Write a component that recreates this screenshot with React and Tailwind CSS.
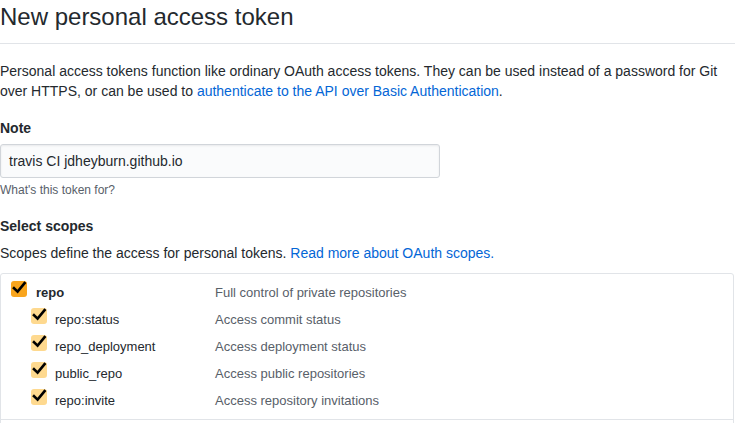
import React from 'react';

const scopes = [
  { name: 'repo:status', description: 'Access commit status' },
  { name: 'repo_deployment', description: 'Access deployment status' },
  { name: 'public_repo', description: 'Access public repositories' },
  { name: 'repo:invite', description: 'Access repository invitations' },
];

function Check({ light }) {
  return (
    <span
      className={`mt-[2px] flex h-4 w-4 flex-shrink-0 rounded-[3px] ${
        light ? 'bg-[#fed98f]' : 'bg-[#f9a51d]'
      }`}
    >
      <svg viewBox="0 0 16 16" className="h-4 w-4">
        <path
          d="M3 7.2 L6.6 10.6 L13.6 2.2"
          fill="none"
          stroke="#000"
          strokeWidth="2.6"
          strokeLinecap="square"
        />
      </svg>
    </span>
  );
}

function ScopeRow({ name, description, child }) {
  return (
    <div className="flex h-[27px] items-start">
      <div className={`flex w-[214px] items-start ${child ? 'pl-[30px] gap-2' : 'pl-[10px] gap-[9px]'}`}>
        <Check light={child} />
        <span className={`text-[13px] leading-[27px] text-[#24292e] ${child ? '' : 'font-bold'}`}>
          {name}
        </span>
      </div>
      <span className="text-[13px] leading-[27px] text-[#586069]">{description}</span>
    </div>
  );
}

export default function App() {
  return (
    <div className="w-[735px] bg-white text-[#24292e] font-['Liberation_Sans',Arial,sans-serif]">
      <div className="pt-[2px] pb-[11px] border-b border-[#e1e4e8]">
        <h1 className="text-[24px] leading-[30px] font-normal">New personal access token</h1>
      </div>

      <p className="mt-[17px] text-[14px] leading-5">
        Personal access tokens function like ordinary OAuth access tokens. They can be used instead of a
        password for Git over HTTPS, or can be used to{' '}
        <a className="text-[#0366d6]">authenticate to the API over Basic Authentication</a>.
      </p>

      <div className="mt-[17px] text-[14px] leading-5 font-bold">Note</div>
      <div className="mt-[6px] flex h-[34px] w-[440px] items-center rounded-[3px] border border-[#d1d5da] bg-[#fafbfc] px-2 text-[14px] shadow-[inset_0_1px_2px_rgba(27,31,35,0.075)]">
        travis CI jdheyburn.github.io
      </div>
      <div className="mt-[3px] text-[12px] leading-[18px] text-[#586069]">What's this token for?</div>

      <div className="mt-[17px] text-[14px] leading-5 font-bold">Select scopes</div>
      <p className="mt-[7px] text-[14px] leading-5">
        Scopes define the access for personal tokens.{' '}
        <a className="text-[#0366d6]">Read more about OAuth scopes.</a>
      </p>

      <div className="mt-[10px] w-[734px] rounded-[3px] border border-[#e1e4e8]">
        <div className="py-[5px]">
          <ScopeRow name="repo" description="Full control of private repositories" />
          {scopes.map((s) => (
            <ScopeRow key={s.name} name={s.name} description={s.description} child />
          ))}
        </div>
        <div className="h-10 border-t border-[#e1e4e8]" />
      </div>
    </div>
  );
}
